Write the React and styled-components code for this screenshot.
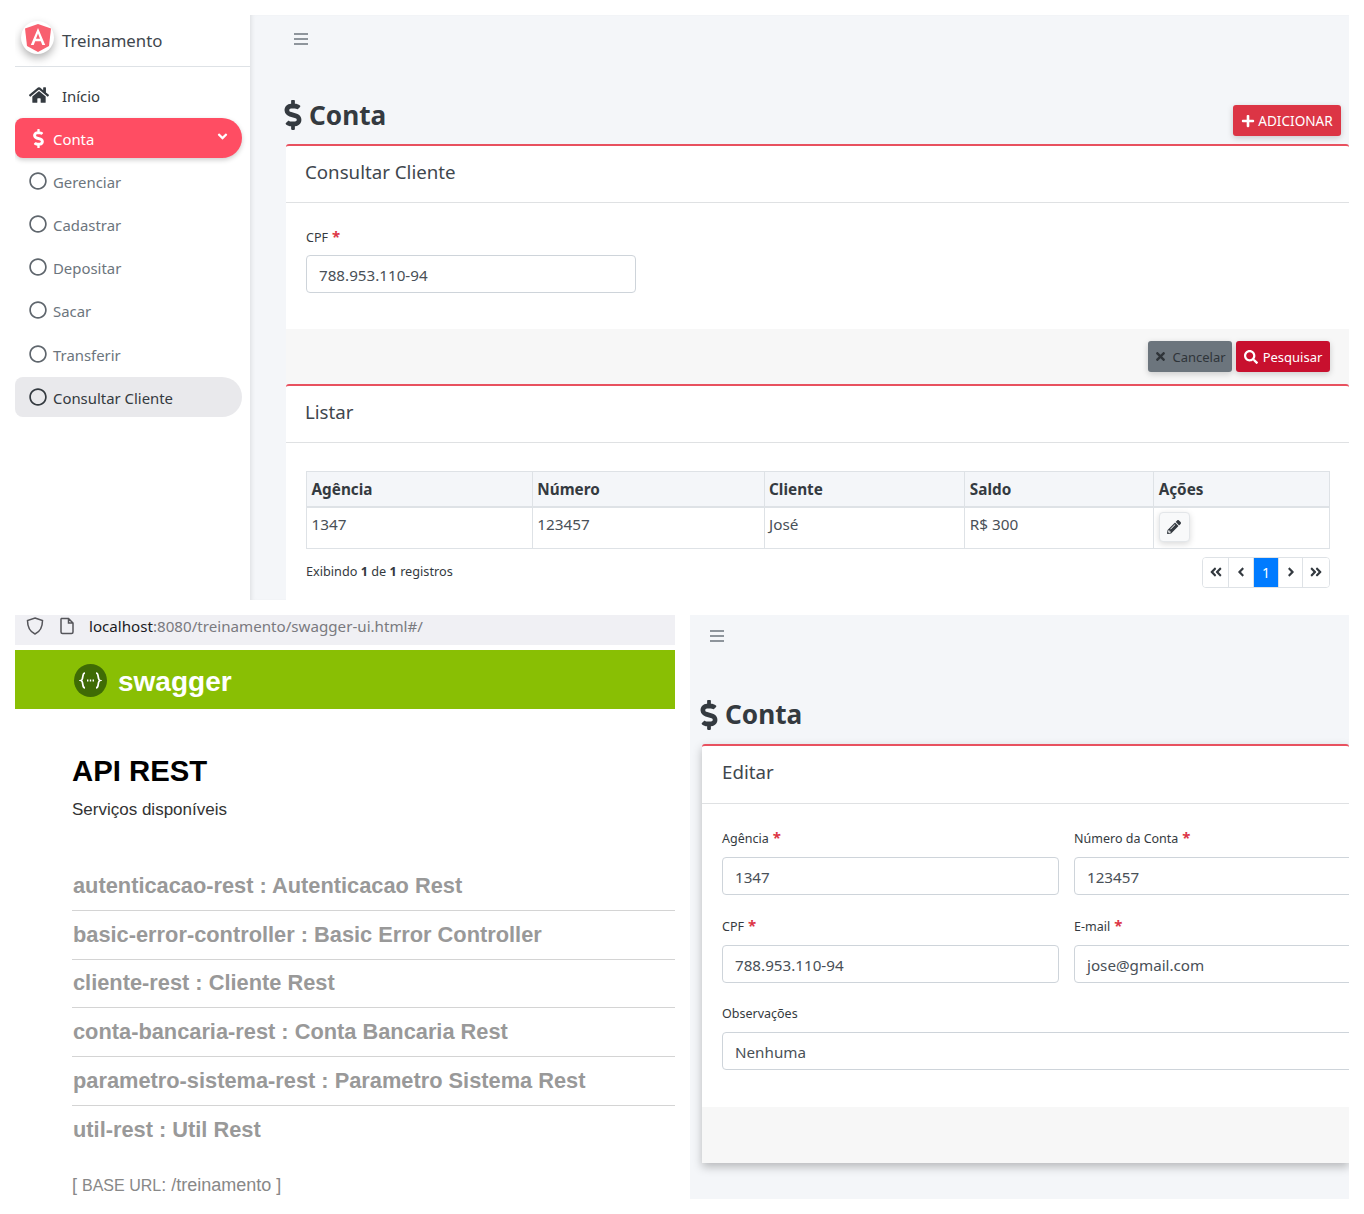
import React from "react";
import styled, { createGlobalStyle } from "styled-components";
import {
  FaHome,
  FaDollarSign,
  FaAngleDown,
  FaRegCircle,
  FaPlus,
  FaTimes,
  FaSearch,
  FaPencilAlt,
  FaAngleDoubleLeft,
  FaAngleDoubleRight,
  FaAngleLeft,
  FaAngleRight,
} from "react-icons/fa";

const GlobalStyle = createGlobalStyle`
  html, body { margin: 0; padding: 0; background: #fff; }
  body { font-family: "Noto Sans", "Open Sans", sans-serif; color: #343a40; }
  * { box-sizing: border-box; }
`;

const Page = styled.div`
  width: 1364px;
  height: 1214px;
  padding: 15px 15px 0;
  display: flex;
  flex-direction: column;
  gap: 15px;
  overflow: hidden;
`;

const AdminPanel = styled.section`
  display: flex;
  width: 1334px;
  height: 585px;
  overflow: hidden;
`;

const Sidebar = styled.aside`
  width: 235px;
  flex: none;
  background: #fff;
  position: relative;
  z-index: 1;
`;

const Brand = styled.div`
  height: 52px;
  display: flex;
  align-items: center;
  gap: 8px;
  padding: 0 0 0 6px;
  border-bottom: 1px solid #dee2e6;
  font-size: 16.8px;
  color: #3f474e;
`;

const LogoCircle = styled.span`
  width: 33px;
  height: 33px;
  border-radius: 50%;
  background: #fff;
  box-shadow: 0 4px 8px rgba(0, 0, 0, 0.3);
  display: flex;
  align-items: center;
  justify-content: center;
  margin-top: -6px;
`;

const Menu = styled.nav`
  padding: 8px 8px 0 0;
  display: flex;
  flex-direction: column;
  gap: 3.2px;
`;

const MenuItem = styled.div`
  height: 40px;
  display: flex;
  align-items: center;
  font-size: 14.9px;
  padding-left: 14px;
  padding-top: ${(p) => (p.$top || p.$red ? "2px" : "1px")};
  border-radius: 8px 20px 20px 8px;
  position: relative;
  color: ${(p) => (p.$red ? "#fff" : p.$top || p.$grey ? "#343a40" : "#6c757d")};
  background: ${(p) => (p.$red ? "#ff4d63" : p.$grey ? "#e9e9ec" : "transparent")};
  box-shadow: ${(p) => (p.$red ? "0 2px 5px rgba(0,0,0,.2)" : "none")};
`;

const MenuIcon = styled.span`
  display: flex;
  width: ${(p) => p.$w || 24}px;
  flex: none;
  font-size: ${(p) => p.$size || 18}px;
  color: ${(p) => p.$color || "inherit"};
  margin-top: -2px;
`;

const Chevron = styled.span`
  position: absolute;
  right: 12px;
  top: 11px;
  font-size: 15px;
  display: flex;
`;

const Main = styled.main`
  flex: 1;
  min-width: 0;
  background: #f4f6f9;
  box-shadow: inset 4px 0 5px -3px rgba(0, 0, 0, 0.1);
  padding-left: ${(p) => p.$inset}px;
  display: flex;
  flex-direction: column;
`;

const Burger = styled.div`
  height: ${(p) => p.$h}px;
  display: flex;
  align-items: center;
  color: #6c757d;
  margin-left: ${(p) => p.$left}px;
`;

const TitleRow = styled.div`
  display: flex;
  align-items: center;
  justify-content: space-between;
  height: ${(p) => p.$h}px;
  padding-top: ${(p) => p.$top}px;
  padding-right: 8px;
`;

const Title = styled.h1`
  margin: 0 0 0 -8px;
  font-size: 26.2px;
  font-weight: 700;
  display: flex;
  align-items: center;
  gap: 1px;
  color: #343a40;
  line-height: 1;
  svg {
    font-size: 30px;
  }
`;

const Button = styled.button`
  border: 0;
  border-radius: 3px;
  height: 31px;
  width: ${(p) => p.$w}px;
  display: inline-flex;
  align-items: center;
  justify-content: center;
  gap: 5px;
  font-family: inherit;
  font-size: 13px;
  color: ${(p) => p.$text || "#fff"};
  background: ${(p) => p.$bg};
  box-shadow: 0 2px 6px rgba(0, 0, 0, 0.18);
  padding: 0;
`;

const AddButton = styled(Button)`
  align-self: flex-end;
  margin-bottom: 8px;
  font-size: 13.6px;
  gap: 3px;
`;

const Card = styled.div`
  background: #fff;
  border-top: 2px solid #e8515f;
  border-radius: 3px 3px 0 0;
  flex: ${(p) => (p.$grow ? "1" : "none")};
  box-shadow: ${(p) => (p.$shadow ? "0 4px 10px rgba(0,0,0,.25)" : "none")};
`;

const CardHeader = styled.div`
  height: ${(p) => p.$h || 57}px;
  border-bottom: 1px solid #dfe1e3;
  display: flex;
  align-items: center;
  padding: 0 0 6px ${(p) => p.$left || 19}px;
  font-size: 18.7px;
  color: #3f474e;
`;

const CardBody = styled.div`
  padding: ${(p) => p.$pad};
  height: ${(p) => p.$h}px;
`;

const Label = styled.label`
  display: block;
  font-size: 12.5px;
  color: #343a40;
  height: ${(p) => p.$h || 28}px;
  line-height: 18px;
`;

const Required = styled.span`
  color: #dc3545;
  font-weight: 700;
  font-size: 15px;
  margin-left: 4px;
`;

const Input = styled.div`
  height: 38px;
  width: ${(p) => p.$w || "100%"};
  border: 1px solid #ced4da;
  border-radius: 4px;
  background: #fff;
  display: flex;
  align-items: center;
  padding: 2px 0 0 12px;
  font-size: 15.2px;
  color: #495057;
`;

const CardFooter = styled.div`
  height: ${(p) => p.$h}px;
  background: #f7f7f7;
  display: flex;
  justify-content: flex-end;
  gap: 4px;
  padding: 12px 19px 0 0;
`;

const Table = styled.table`
  width: 1024px;
  border-collapse: collapse;
  font-size: 15.3px;
  th,
  td {
    border: 1px solid #dee2e6;
    padding: 0 0 0 4.5px;
    text-align: left;
  }
  th {
    height: 35px;
    background: #f4f6f9;
    font-weight: 700;
    color: #343a40;
    border-bottom-width: 2px;
  }
  td {
    height: 41px;
    color: #495057;
    padding-bottom: 7px;
  }
`;

const EditButton = styled.span`
  width: 31px;
  height: 30px;
  margin-top: 4px;
  margin-bottom: -1px;
  border: 1px solid #e3e6e9;
  border-radius: 4px;
  background: #f8f9fa;
  box-shadow: 0 2px 6px rgba(0, 0, 0, 0.15);
  display: flex;
  align-items: center;
  justify-content: center;
  font-size: 14px;
  color: #343a40;
`;

const TableFoot = styled.div`
  width: 1024px;
  display: flex;
  justify-content: space-between;
  align-items: center;
  margin-top: 8px;
  font-size: 12.7px;
  color: #343a40;
`;

const FootText = styled.span`
  margin-bottom: 2px;
`;

const Pager = styled.div`
  display: flex;
  height: 31px;
  border: 1px solid #dee2e6;
  border-radius: 4px;
  overflow: hidden;
`;

const PageCell = styled.span`
  width: ${(p) => p.$w || 25}px;
  display: flex;
  align-items: center;
  justify-content: center;
  font-size: 14px;
  color: ${(p) => (p.$active ? "#fff" : "#343a40")};
  background: ${(p) => (p.$active ? "#007bff" : "#fff")};
  & + & {
    border-left: 1px solid #dee2e6;
  }
`;

const BottomRow = styled.div`
  display: flex;
  gap: 15px;
  height: 584px;
`;

const SwaggerPanel = styled.section`
  width: 660px;
  flex: none;
  font-family: "Liberation Sans", Arial, sans-serif;
`;

const UrlBar = styled.div`
  height: 30px;
  background: #f0f0f4;
  display: flex;
  align-items: center;
  padding: 0 0 9px 10px;
  font-family: "Noto Sans", sans-serif;
  font-size: 15.15px;
  color: #7a7a7f;
  gap: 14px;
`;

const UrlHost = styled.b`
  font-weight: 400;
  color: #1b1b1f;
`;

const SwaggerBar = styled.div`
  height: 59px;
  margin-top: 5px;
  background: #89bf04;
  display: flex;
  align-items: center;
  padding: 2px 0 0 59px;
  gap: 11px;
  font-size: 28px;
  font-weight: 700;
  color: #fff;
`;

const SwaggerWord = styled.span`
  padding-top: 3px;
`;

const SwaggerBadge = styled.span`
  width: 33px;
  height: 33px;
  border-radius: 50%;
  background: #3f6b05;
  display: flex;
  align-items: center;
  justify-content: center;
`;

const SwaggerBody = styled.div`
  padding: 44px 0 0 57px;
`;

const ApiTitle = styled.h2`
  margin: 0;
  font-size: 29.3px;
  line-height: 36px;
  font-weight: 700;
  color: #000;
`;

const ApiSub = styled.p`
  margin: 10px 0 41px;
  font-size: 17px;
  line-height: 22px;
  color: #333;
`;

const Resource = styled.div`
  height: 48.8px;
  display: flex;
  align-items: center;
  padding: 0 0 0 1px;
  border-bottom: ${(p) => (p.$last ? "0" : "1px solid #d4d4d4")};
  font-size: 21.8px;
  font-weight: 700;
  color: #999;
`;

const BaseUrl = styled.div`
  margin-top: 20px;
  font-size: 18px;
  color: #888;
`;

const SmallCaps = styled.span`
  font-size: 16px;
`;

const EditMain = styled(Main)`
  box-shadow: none;
  overflow: hidden;
`;

const FormGrid = styled.div`
  display: grid;
  grid-template-columns: 337px 337px;
  column-gap: 15px;
  row-gap: 21px;
`;

const FullField = styled.div`
  grid-column: 1 / span 2;
  width: 700px;
  margin-top: 1px;
`;

const AngularLogo = () => (
  <svg width="26" height="28" viewBox="0 0 26 28">
    <path d="M13 0 L26 4.6 L24 22 L13 28 L2 22 L0 4.6 Z" fill="#f8606f" />
    <path
      d="M13 4 L5.8 21 H8.7 L10.2 17.2 H15.8 L17.3 21 H20.2 Z M13 9.6 L15 14.8 H11 Z"
      fill="#fff"
      fillRule="evenodd"
    />
  </svg>
);

const Hamburger = () => (
  <svg width="16" height="14" viewBox="0 0 16 14">
    <path d="M1 2h14M1 7h14M1 12h14" stroke="currentColor" strokeWidth="1.6" />
  </svg>
);

const ShieldIcon = () => (
  <svg width="20" height="20" viewBox="0 0 20 20" fill="none" stroke="#55555a" strokeWidth="1.5">
    <path d="M10 2 L17.5 4.5 C17.5 11 15.5 15.5 10 18 C4.5 15.5 2.5 11 2.5 4.5 Z" />
  </svg>
);

const PageIcon = () => (
  <svg width="16" height="18" viewBox="0 0 16 18" fill="none" stroke="#55555a" strokeWidth="1.5">
    <path d="M2.5 1.5 H9.5 L14 6 V15 Q14 16.5 12.5 16.5 H3.5 Q2 16.5 2 15 V2 Z M9.5 1.5 V6 H14" />
  </svg>
);

const SwaggerGlyph = () => (
  <svg width="23" height="17" viewBox="0 0 23 17" fill="none" stroke="#fff" strokeWidth="1.7">
    <path d="M6 1 C2.5 1 5 7.5 2 8.5 C5 9.5 2.5 16 6 16" />
    <path d="M17 1 C20.5 1 18 7.5 21 8.5 C18 9.5 20.5 16 17 16" />
    <path d="M8 8.5h1.4M10.8 8.5h1.4M13.6 8.5h1.4" strokeWidth="1.8" />
  </svg>
);

const subItems = ["Gerenciar", "Cadastrar", "Depositar", "Sacar", "Transferir"];

const resources = [
  "autenticacao-rest : Autenticacao Rest",
  "basic-error-controller : Basic Error Controller",
  "cliente-rest : Cliente Rest",
  "conta-bancaria-rest : Conta Bancaria Rest",
  "parametro-sistema-rest : Parametro Sistema Rest",
  "util-rest : Util Rest",
];

const App = () => {
  return (
    <Page>
      <GlobalStyle />
      <AdminPanel>
        <Sidebar>
          <Brand>
            <LogoCircle>
              <AngularLogo />
            </LogoCircle>
            <span>Treinamento</span>
          </Brand>
          <Menu>
            <MenuItem $top>
              <MenuIcon $w={33} $size={20}>
                <FaHome />
              </MenuIcon>
              Início
            </MenuItem>
            <MenuItem $red>
              <MenuIcon $w={24} $size={19}>
                <FaDollarSign />
              </MenuIcon>
              Conta
              <Chevron>
                <FaAngleDown />
              </Chevron>
            </MenuItem>
            {subItems.map((item) => (
              <MenuItem key={item}>
                <MenuIcon $size={18} $color="#5f666d">
                  <FaRegCircle />
                </MenuIcon>
                {item}
              </MenuItem>
            ))}
            <MenuItem $grey>
              <MenuIcon $size={18} $color="#343a40">
                <FaRegCircle />
              </MenuIcon>
              Consultar Cliente
            </MenuItem>
          </Menu>
        </Sidebar>
        <Main $inset={36}>
          <Burger $h={48} $left={7}>
            <Hamburger />
          </Burger>
          <TitleRow $h={81} $top={23}>
            <Title>
              <FaDollarSign />
              Conta
            </Title>
            <AddButton $w={108} $bg="#dc3545">
              <FaPlus size={14} />
              ADICIONAR
            </AddButton>
          </TitleRow>
          <Card>
            <CardHeader>Consultar Cliente</CardHeader>
            <CardBody $pad="24px 20px 0" $h={126}>
              <Label>
                CPF<Required>*</Required>
              </Label>
              <Input $w="330px">788.953.110-94</Input>
            </CardBody>
            <CardFooter $h={55}>
              <Button $w={84} $bg="#6c757d" $text="#2f3439">
                <FaTimes size={13} />
                Cancelar
              </Button>
              <Button $w={94} $bg="#c8102e">
                <FaSearch size={14} />
                Pesquisar
              </Button>
            </CardFooter>
          </Card>
          <Card $grow>
            <CardHeader>Listar</CardHeader>
            <CardBody $pad="28px 20px 0">
              <Table>
                <colgroup>
                  <col width="226" />
                  <col width="232" />
                  <col width="201" />
                  <col width="189" />
                  <col width="176" />
                </colgroup>
                <thead>
                  <tr>
                    <th>Agência</th>
                    <th>Número</th>
                    <th>Cliente</th>
                    <th>Saldo</th>
                    <th>Ações</th>
                  </tr>
                </thead>
                <tbody>
                  <tr>
                    <td>1347</td>
                    <td>123457</td>
                    <td>José</td>
                    <td>R$ 300</td>
                    <td>
                      <EditButton>
                        <FaPencilAlt />
                      </EditButton>
                    </td>
                  </tr>
                </tbody>
              </Table>
              <TableFoot>
                <FootText>
                  Exibindo <b>1</b> de <b>1</b> registros
                </FootText>
                <Pager>
                  <PageCell>
                    <FaAngleDoubleLeft />
                  </PageCell>
                  <PageCell>
                    <FaAngleLeft />
                  </PageCell>
                  <PageCell $active>1</PageCell>
                  <PageCell $w={24}>
                    <FaAngleRight />
                  </PageCell>
                  <PageCell $w={27}>
                    <FaAngleDoubleRight />
                  </PageCell>
                </Pager>
              </TableFoot>
            </CardBody>
          </Card>
        </Main>
      </AdminPanel>
      <BottomRow>
        <SwaggerPanel>
          <UrlBar>
            <ShieldIcon />
            <PageIcon />
            <span>
              <UrlHost>localhost</UrlHost>:8080/treinamento/swagger-ui.html#/
            </span>
          </UrlBar>
          <SwaggerBar>
            <SwaggerBadge>
              <SwaggerGlyph />
            </SwaggerBadge>
            <SwaggerWord>swagger</SwaggerWord>
          </SwaggerBar>
          <SwaggerBody>
            <ApiTitle>API REST</ApiTitle>
            <ApiSub>Serviços disponíveis</ApiSub>
            {resources.map((name, i) => (
              <Resource key={name} $last={i === resources.length - 1}>
                {name}
              </Resource>
            ))}
            <BaseUrl>
              [ <SmallCaps>BASE URL</SmallCaps>: /treinamento ]
            </BaseUrl>
          </SwaggerBody>
        </SwaggerPanel>
        <EditMain $inset={12}>
          <Burger $h={42} $left={7}>
            <Hamburger />
          </Burger>
          <TitleRow $h={87} $top={28}>
            <Title>
              <FaDollarSign />
              Conta
            </Title>
          </TitleRow>
          <Card $shadow>
            <CardHeader $h={58} $left={20}>
              Editar
            </CardHeader>
            <CardBody $pad="24px 20px 0" $h={303}>
              <FormGrid>
                <div>
                  <Label $h={29}>
                    Agência<Required>*</Required>
                  </Label>
                  <Input>1347</Input>
                </div>
                <div>
                  <Label $h={29}>
                    Número da Conta<Required>*</Required>
                  </Label>
                  <Input>123457</Input>
                </div>
                <div>
                  <Label $h={29}>
                    CPF<Required>*</Required>
                  </Label>
                  <Input>788.953.110-94</Input>
                </div>
                <div>
                  <Label $h={29}>
                    E-mail<Required>*</Required>
                  </Label>
                  <Input>jose@gmail.com</Input>
                </div>
                <FullField>
                  <Label $h={27}>Observações</Label>
                  <Input>Nenhuma</Input>
                </FullField>
              </FormGrid>
            </CardBody>
            <CardFooter $h={56} />
          </Card>
        </EditMain>
      </BottomRow>
    </Page>
  );
};

export default App;
